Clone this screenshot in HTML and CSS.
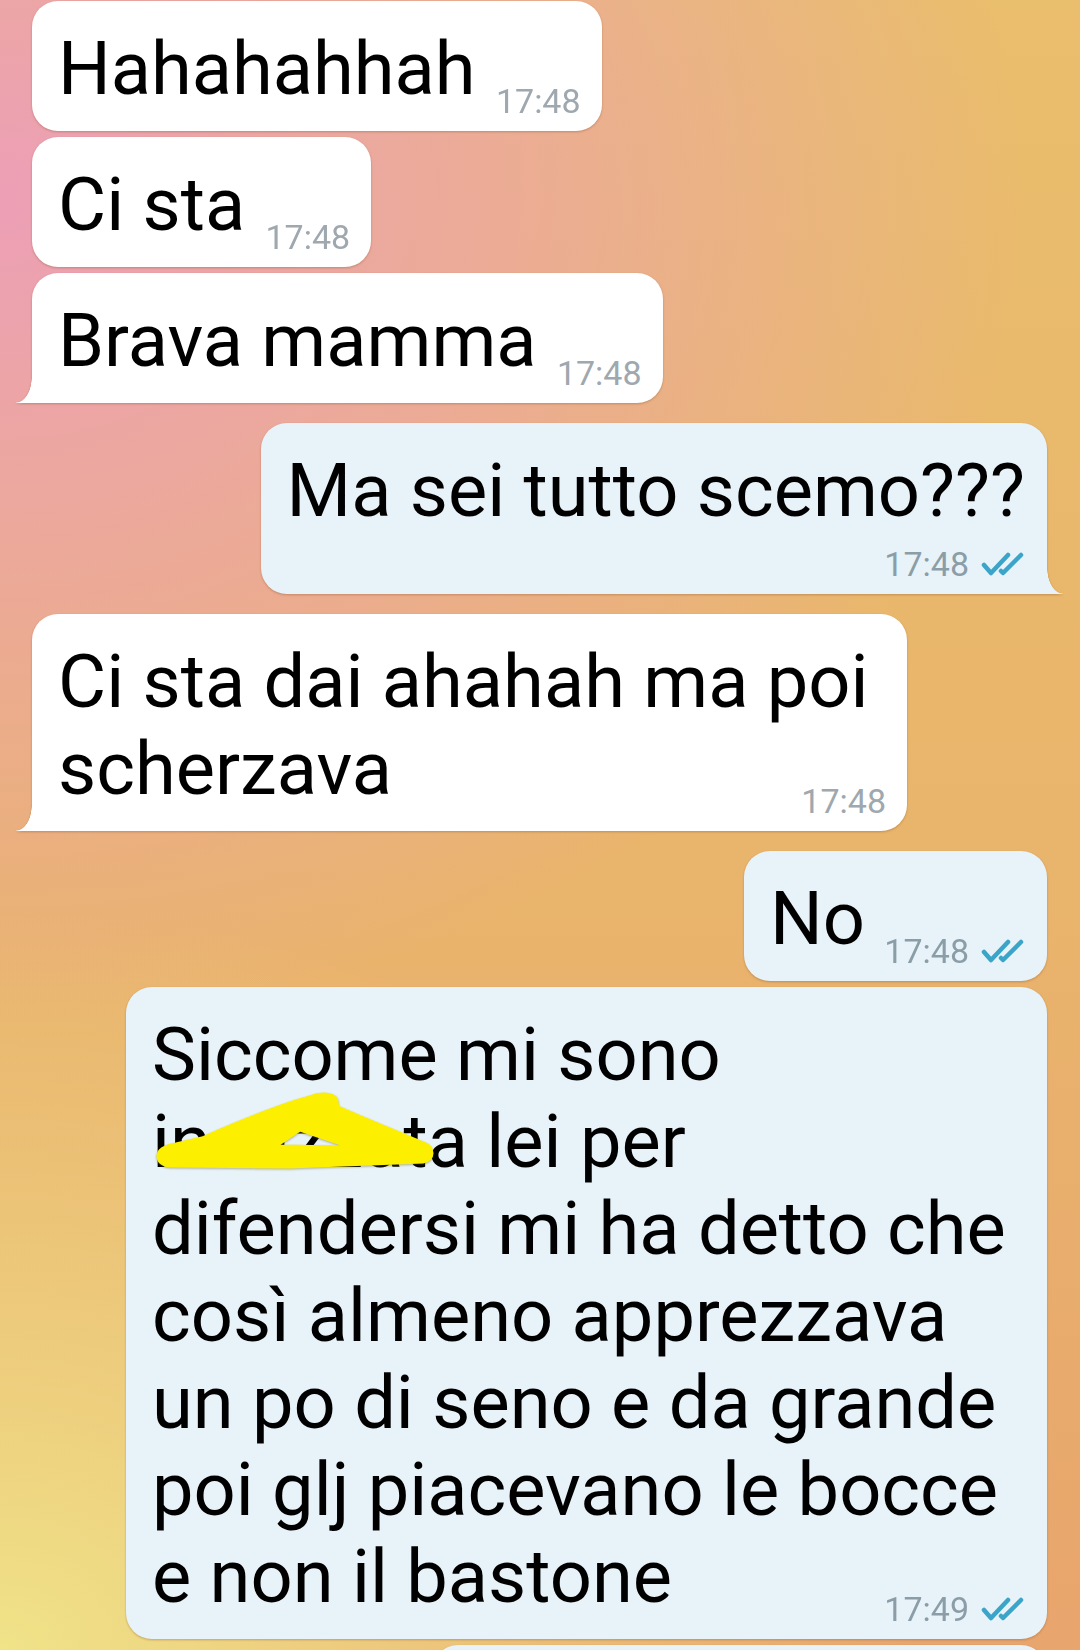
FILE: index.html
```html
<!DOCTYPE html>
<html lang="it">

<head>
    <meta charset="UTF-8">
    <meta name="viewport" content="width=device-width, initial-scale=1.0">
    <title>Chat</title>
    <link rel="stylesheet" href="styles.css">
</head>

<body>
    <div class="chat">
        <div class="msg in">
            <span class="text">Hahahahhah</span><span class="spacer"></span>
            <span class="meta"><span class="time">17:48</span></span>
        </div>
        <div class="msg in">
            <span class="text">Ci sta</span><span class="spacer"></span>
            <span class="meta"><span class="time">17:48</span></span>
        </div>
        <div class="msg in tail">
            <span class="text">Brava mamma</span><span class="spacer"></span>
            <span class="meta"><span class="time">17:48</span></span>
        </div>

        <div class="msg out tail stack">
            <span class="text">Ma sei tutto scemo???</span><span class="spacer"></span>
            <span class="meta"><span class="time">17:48</span>
                <svg class="checks" viewBox="0 0 46 24" width="46" height="24">
                    <path d="M3 13 L10 21 L27 3" />
                    <path d="M20 19 L22 21 L40 3" />
                </svg>
            </span>
        </div>

        <div class="msg in tail">
            <span class="text">Ci sta dai ahahah ma poi scherzava</span><span class="spacer"></span>
            <span class="meta"><span class="time">17:48</span></span>
        </div>

        <div class="msg out">
            <span class="text">No</span><span class="spacer"></span>
            <span class="meta"><span class="time">17:48</span>
                <svg class="checks" viewBox="0 0 46 24" width="46" height="24">
                    <path d="M3 13 L10 21 L27 3" />
                    <path d="M20 19 L22 21 L40 3" />
                </svg>
            </span>
        </div>
        <div class="msg out">
            <span class="text">Siccome mi sono incazzata lei per difendersi mi ha detto che così almeno apprezzava un po di seno e da grande poi glj piacevano le bocce e non il bastone</span><span class="spacer"></span>
            <span class="meta"><span class="time">17:49</span>
                <svg class="checks" viewBox="0 0 46 24" width="46" height="24">
                    <path d="M3 13 L10 21 L27 3" />
                    <path d="M20 19 L22 21 L40 3" />
                </svg>
            </span>
            <!-- scarabocchio giallo sopra la parola censurata -->
            <svg class="scribble" viewBox="0 0 290 85" width="290" height="85">
                <path fill-rule="evenodd"
                    d="M8 66 C8 60 14 56 26 54 L52 48 C84 34 126 16 160 7 C172 2 188 3 187 13 L188 17 C220 31 250 43 273 53 C285 57 285 70 273 72 L140 77 L20 76 C12 75 8 71 8 66 Z M126 56 L150 40 L200 57 Z" />
            </svg>
        </div>
        <div class="msg out next"></div>
    </div>
</body>

</html>
```

FILE: styles.css
```css
html,
body {
    margin: 0;
    height: 1650px;
    overflow: hidden;
}

body {
    font-family: Roboto, 'Noto Sans', sans-serif;
    color: #000;
    background:
        radial-gradient(ellipse 95% 50% at 0% 12%, rgba(237, 159, 182, 1) 0%, rgba(237, 159, 182, 0.55) 50%, rgba(237, 159, 182, 0) 100%),
        radial-gradient(ellipse 85% 45% at 0% 100%, rgba(240, 227, 136, 1) 0%, rgba(240, 227, 136, 0) 100%),
        linear-gradient(180deg, #e9be6c 0%, #e9b46c 55%, #e8a56d 100%);
}

.chat {
    display: flex;
    flex-direction: column;
    gap: 6px;
    padding: 1px 33px 0 32px;
}

.msg {
    position: relative;
    box-sizing: border-box;
    padding: 24px 26px 19px 26px;
    border-radius: 26px;
    font-size: 34px;
    line-height: 41px;
    filter: drop-shadow(0 1.5px 1px rgba(120, 70, 30, 0.35));
}

.msg.tail {
    margin-bottom: 14px;
}

.msg .text {
    font-size: 74px;
    line-height: 87px;
}

.spacer {
    display: inline-block;
    height: 1px;
}

.msg.stack .spacer {
    display: block;
    height: 41px;
}

.meta {
    position: absolute;
    right: 21px;
    bottom: 13px;
    display: flex;
    align-items: baseline;
    gap: 12px;
    font-size: 34px;
    line-height: 34px;
}

/* in arrivo */
.msg.in {
    align-self: flex-start;
    max-width: 875px;
    background: #fff;
}

.msg.in .spacer {
    width: 100px;
}

.msg.in .time {
    color: #9ea8ae;
}

.msg.in.tail {
    border-bottom-left-radius: 0;
}

.msg.in.tail::before {
    content: '';
    position: absolute;
    left: -16px;
    bottom: 0;
    width: 16px;
    height: 26px;
    background: #fff;
    -webkit-mask-image: radial-gradient(ellipse 16px 26px at 0 0, transparent 97%, #000 100%);
    mask-image: radial-gradient(ellipse 16px 26px at 0 0, transparent 97%, #000 100%);
}

/* inviati */
.msg.out {
    align-self: flex-end;
    max-width: 921px;
    background: #e8f3f9;
    padding-right: 22px;
}

.msg.out .spacer {
    width: 160px;
}

.msg.out .meta {
    right: 20px;
}

.msg.out .time {
    color: #8b9ea8;
}

.msg.out.tail {
    border-bottom-right-radius: 0;
}

.msg.out.tail::after {
    content: '';
    position: absolute;
    right: -16px;
    bottom: 0;
    width: 16px;
    height: 26px;
    background: #e8f3f9;
    -webkit-mask-image: radial-gradient(ellipse 16px 26px at 100% 0, transparent 97%, #000 100%);
    mask-image: radial-gradient(ellipse 16px 26px at 100% 0, transparent 97%, #000 100%);
}

.checks {
    fill: none;
    stroke: #3ba4c9;
    stroke-width: 4.5;
    stroke-linecap: round;
    stroke-linejoin: round;
}

.scribble {
    position: absolute;
    left: 24px;
    top: 103px;
    fill: #fcef00;
    stroke: #fcef00;
    stroke-width: 3;
    stroke-linejoin: round;
    filter: drop-shadow(0 1px 1px rgba(90, 80, 0, 0.4));
}

.msg.next {
    width: 615px;
    height: 130px;
}
```
